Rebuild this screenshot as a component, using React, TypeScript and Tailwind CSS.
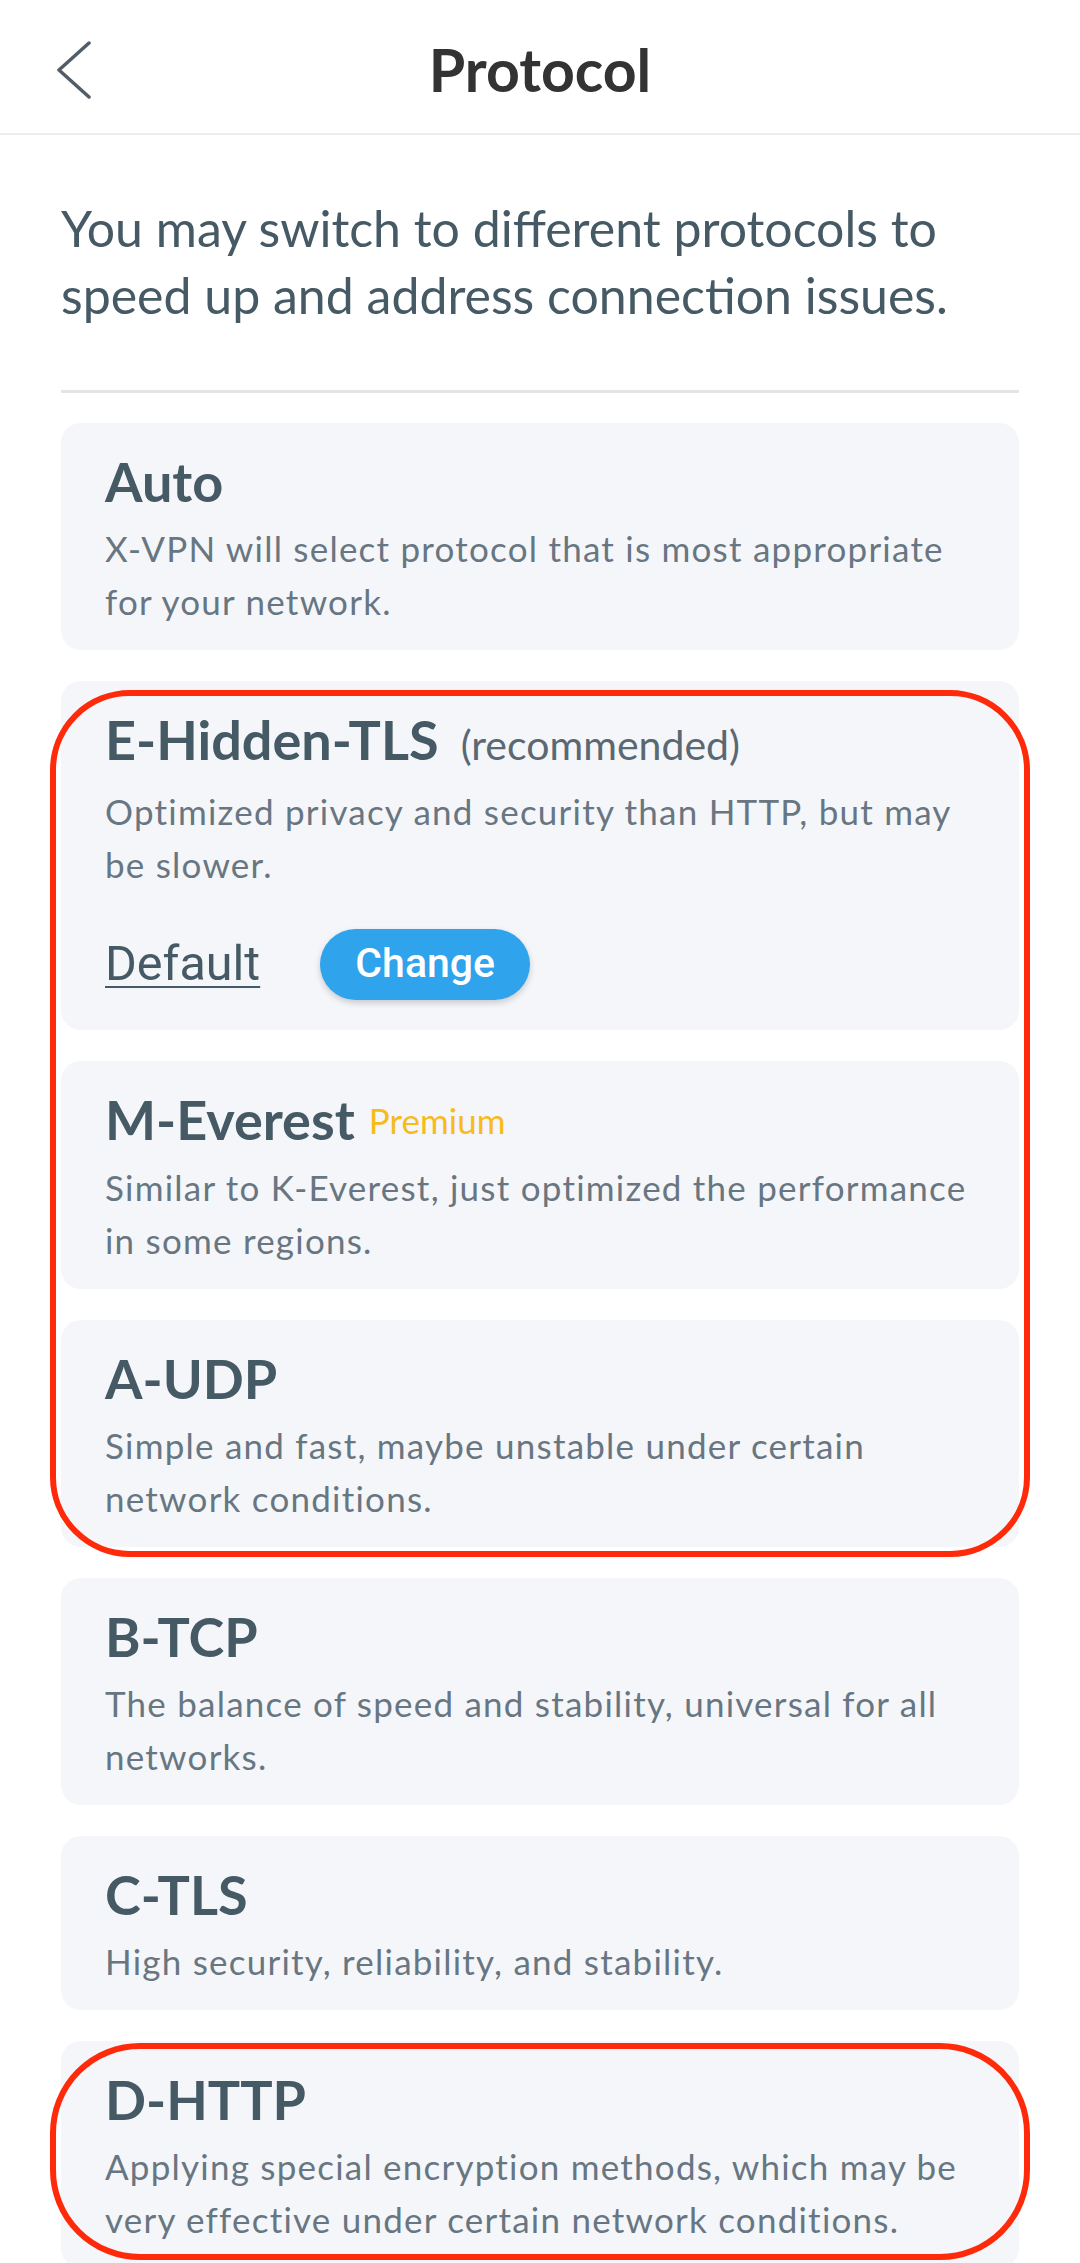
import React from 'react';

type Protocol = {
  name: string;
  tag?: 'recommended' | 'premium';
  desc: string;
  actions?: boolean;
};

const PROTOCOLS: Protocol[] = [
  { name: 'Auto', desc: 'X-VPN will select protocol that is most appropriate for your network.' },
  {
    name: 'E-Hidden-TLS',
    tag: 'recommended',
    desc: 'Optimized privacy and security than HTTP, but may be slower.',
    actions: true,
  },
  { name: 'M-Everest', tag: 'premium', desc: 'Similar to K-Everest, just optimized the performance in some regions.' },
  { name: 'A-UDP', desc: 'Simple and fast, maybe unstable under certain network conditions.' },
  { name: 'B-TCP', desc: 'The balance of speed and stability, universal for all networks.' },
  { name: 'C-TLS', desc: 'High security, reliability, and stability.' },
  { name: 'D-HTTP', desc: 'Applying special encryption methods, which may be very effective under certain network conditions.' },
];

const ProtocolCard: React.FC<{ p: Protocol }> = ({ p }) => (
  <div className="rounded-[20px] bg-[#f5f6fa] pl-[44px] pr-[40px] pt-[28px] pb-[22px]">
    <div className="flex items-baseline">
      <span className="text-[54px] leading-[62px] font-bold text-[#455a64]">{p.name}</span>
      {p.tag === 'recommended' && (
        <span className="ml-[22px] text-[41px] text-[#5a6872]">(recommended)</span>
      )}
      {p.tag === 'premium' && (
        <span className="ml-[14px] relative -top-[6px] text-[35px] text-[#f7bb1a]">Premium</span>
      )}
    </div>
    <p className="mt-[9px] text-[35px] leading-[53px] tracking-[0.035em] text-[#687682]">{p.desc}</p>
    {p.actions && (
      <div className="mt-[38px] mb-[8px] flex items-center gap-[60px] font-['Roboto',sans-serif]">
        <span className="text-[48.5px] leading-none text-[#455a64] underline decoration-[2px] underline-offset-[6px]">
          Default
        </span>
        <button className="flex h-[71px] w-[210px] items-center justify-center rounded-full bg-[#2fa3eb] text-[41px] font-medium text-white shadow-[0_3px_6px_rgba(0,0,0,0.18)]">
          Change
        </button>
      </div>
    )}
  </div>
);

export default function App() {
  return (
    <div className="relative min-h-[2263px] bg-white font-['Lato',sans-serif] overflow-hidden">
      {/* Header */}
      <header className="relative flex h-[135px] items-center justify-center border-b-2 border-[#ececec] pt-[8px]">
        <svg
          className="absolute left-[57px] top-[41px]"
          width="34"
          height="58"
          viewBox="0 0 34 58"
          fill="none"
        >
          <path d="M32 2 L2 29 L32 56" stroke="#525d68" strokeWidth="3.5" strokeLinecap="round" strokeLinejoin="round" />
        </svg>
        <h1 className="text-[59px] font-bold text-[#333333]">Protocol</h1>
      </header>

      <main className="px-[61px]">
        <p className="mt-[60px] text-[50px] leading-[67px] text-[#455a64]">
          You may switch to different protocols to speed up and address connection issues.
        </p>
        <div className="mt-[61px] h-[3px] bg-[#e4e4e4]" />

        <div className="mt-[30px] flex flex-col gap-[31px] pb-[40px]">
          {PROTOCOLS.map((p) => (
            <ProtocolCard key={p.name} p={p} />
          ))}
        </div>
      </main>

      {/* Highlight outlines */}
      <div className="pointer-events-none absolute left-[50px] top-[690px] h-[867px] w-[980px] rounded-[80px] border-[6px] border-[#ff2a0a]" />
      <div className="pointer-events-none absolute left-[50px] top-[2043px] h-[217px] w-[980px] rounded-[90px] border-[6px] border-[#ff2a0a]" />
    </div>
  );
}
